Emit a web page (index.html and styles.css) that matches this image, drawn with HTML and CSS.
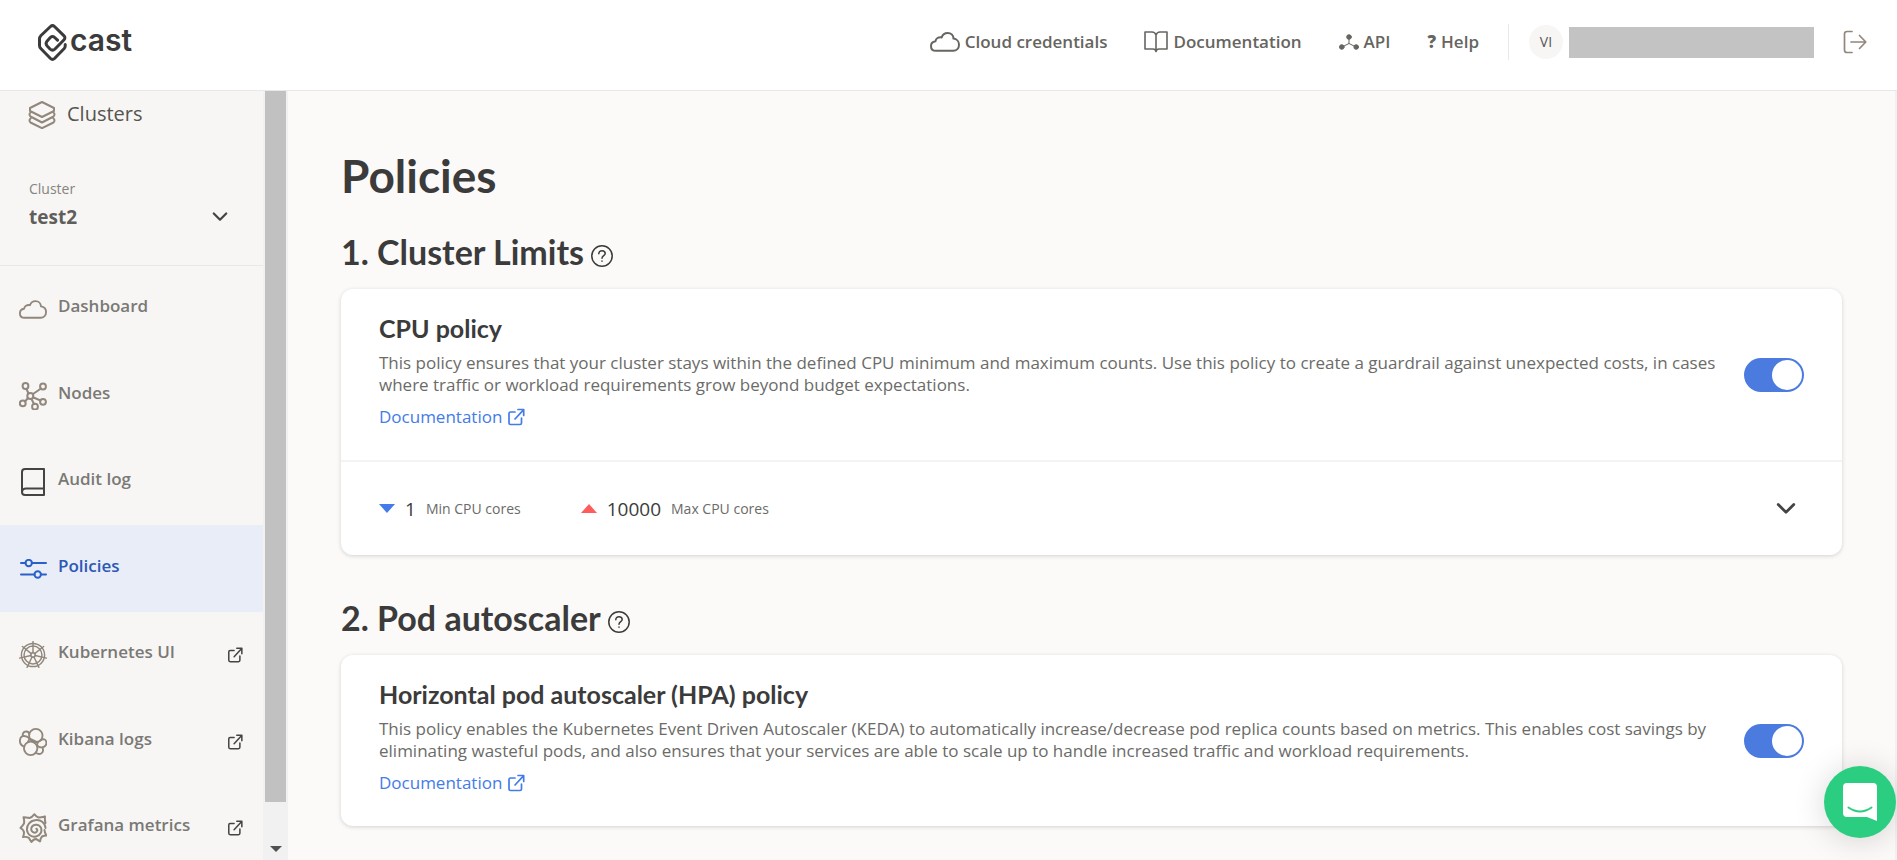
FILE: index.html
```html
<!DOCTYPE html>
<html lang="en">
<head>
<meta charset="utf-8">
<title>Policies</title>
<link rel="stylesheet" href="styles.css">
</head>
<body>
<svg class="sprite" aria-hidden="true">
  <symbol id="external" viewBox="0 0 18 18"><path d="M8 4H3.500Q2 4 2 5.500V15Q2 16.500 3.500 16.500H13Q14.500 16.500 14.500 15V10M8 11L16.500 1.800M11 1.500H16.700V7.500"/></symbol>
  <symbol id="cloud" viewBox="0 0 30 20"><path d="M6 18.800C3 18.800 1 16.800 1 13.900C1 11.500 2.700 9.600 5.500 9.200C5.700 6.500 8.500 4.700 11.700 5.400C12.600 2.700 15 1 17.700 1C21 1 23.400 3.300 23.500 6.600C26.700 7 29 9.500 29 12.700C29 16.200 26.500 18.800 23.200 18.800Z"/></symbol>
  <symbol id="chevron" viewBox="0 0 18 12"><path d="M2 2L9 9L16 2"/></symbol>
  <symbol id="help" viewBox="0 0 22 22"><circle cx="11" cy="11" r="10.200"/><path d="M7.800 8.700C7.800 6.900 9.100 5.700 11 5.700S14.200 6.900 14.200 8.500C14.200 10.600 11 10.600 11 13.200M11 15.900V16.300"/></symbol>
</svg>
<header class="topbar">
  <a class="logo" href="#">
    <svg width="29" height="37" viewBox="0 0 29 37"><path d="M27.200 20.500V22Q27.200 23.500 26 24.800L16.500 34.500Q14.500 36.300 12.500 34.500L3 24.800Q1.500 23.300 1.500 21.500V15Q1.500 13 3 11.500L12.500 2.500Q14.500 .7 16.500 2.500L25.800 11.600Q28 13.700 25.800 16L17 25Q14.500 27.300 12 25L9.200 22Q7 19.500 9.200 17L12.300 13.500Q14.500 11.500 16.700 13.500L19.500 16.200"/></svg>
    <span>cast</span>
  </a>
  <nav class="topnav">
    <a href="#"><svg width="30" height="20"><use href="#cloud"/></svg>Cloud credentials</a>
    <a href="#"><svg class="thin" width="24" height="22" viewBox="0 0 24 22"><path d="M12 4Q11 1 8 1H1V18H9Q11.500 18 12 20.500Q12.500 18 15 18H23V1H16Q13 1 12 4V20"/></svg>Documentation</a>
    <a href="#"><svg class="nodes" width="20" height="16" viewBox="0 0 20 16"><path d="M10 3V9.500L3 13M10 9.500L17 13"/><circle cx="10" cy="3" r="2.300"/><circle cx="2.800" cy="13" r="2.300"/><circle cx="17.200" cy="13" r="2.300"/></svg>API</a>
    <a href="#"><b>?</b>Help</a>
  </nav>
  <div class="account">
    <span class="avatar">VI</span>
    <span class="user"></span>
    <button class="logout" aria-label="Log out"><svg width="24" height="24" viewBox="0 0 24 24"><path d="M9 1.500H4Q1.500 1.500 1.500 4V20Q1.500 22.500 4 22.500H9M8 12H22.500M16.500 5.500L22.800 12L16.500 18.500"/></svg></button>
  </div>
</header>
<div class="shell">
  <aside class="sidebar">
    <a class="clusters" href="#"><svg width="28" height="28" viewBox="0 0 28 28"><path d="M14 1L26 7V10L14 16L2 10V7ZM2.500 11.500Q.5 13 2.500 15.500L14 21.500L25.500 15.500Q27.500 13 25.500 11.500M2.500 17.500Q.5 19 2.500 21.500L14 27.200L25.500 21.500Q27.500 19 25.500 17.500"/></svg><span>Clusters</span></a>
    <button class="picker"><span class="picker-label">Cluster</span><span class="picker-value">test2</span><svg class="chev" width="16" height="12"><use href="#chevron"/></svg></button>
    <nav class="menu">
      <a href="#"><svg class="ico" width="28" height="19"><use href="#cloud"/></svg><span>Dashboard</span></a>
      <a href="#"><svg class="ico" width="28" height="28" viewBox="0 0 28 28"><path d="M9.500 11.500L7.500 7M14 12L22 6.500M14.500 15.500L21.500 18.500M12.500 17L15 22M9 16L6 19.500"/><circle cx="11.300" cy="14" r="3"/><circle cx="6.500" cy="4" r="2.900"/><circle cx="24" cy="4.500" r="2.900"/><circle cx="24" cy="19.800" r="2.900"/><circle cx="16" cy="24.700" r="2.900"/><circle cx="3.800" cy="21.300" r="2.900"/></svg><span>Nodes</span></a>
      <a href="#"><svg class="ico dark" width="28" height="28" viewBox="0 0 28 28"><path d="M25 1H6Q3 1 3 4V24Q3 27 6 27H25ZM3 23.500Q3.500 20.500 7 20.500H25"/></svg><span>Audit log</span></a>
      <a class="active" href="#"><svg class="ico" width="28" height="20" viewBox="0 0 28 20"><path d="M2 4H6.500M13 4H27M2 15.500H15.500M22 15.500H27"/><circle cx="9.700" cy="4" r="3.200"/><circle cx="18.700" cy="15.500" r="3.200"/></svg><span>Policies</span></a>
      <a href="#"><svg class="ico fine" width="28" height="28" viewBox="-14.500 -14.500 29 29"><circle r="12"/><circle r="9.300"/><circle r="2.300"/><path d="M0-2.300V-14M1.800-1.400L11-8.800M2.200.5L14 3.200M1 2.100L6.100 12.800M-1 2.100L-6.100 12.800M-2.200.5L-14 3.200M-1.800-1.400L-11-8.800"/></svg><span>Kubernetes UI</span><svg class="ext" width="16" height="16"><use href="#external"/></svg></a>
      <a href="#"><svg class="ico" width="28" height="28" viewBox="0 0 30 30"><circle cx="18" cy="8.200" r="7.200"/><circle cx="12.500" cy="21.800" r="7.200"/><path d="M11.400 11.300L20 15.400M11 6.500C10.500 3 4 2 3.800 8.800M11.400 11.300C9 9 6 8.300 3.800 8.800C0 10.500-.5 18 5.700 20M11.400 11.300L9.500 15.200M22.800 13.500C30 8 32 20 25 20.700C22 21 20 19.500 19.300 18L20.500 14.500M25 20.700C27.500 26 23 30 17.800 26.500"/></svg><span>Kibana logs</span><svg class="ext" width="16" height="16"><use href="#external"/></svg></a>
      <a href="#"><svg class="ico" width="28" height="30" viewBox="0 0 28 30"><path d="M26.500 10Q25.500 6 26 3.500Q22 4.500 19.500 4.500Q17 3.500 15.500 1.200Q13 4.500 10.500 5Q7 4.500 4.500 4.200Q5.500 8 5 10.500Q3.500 13 1.500 15Q5 17 5 19.500Q5 22 4 24Q8 23.500 10 25Q11 27 12.500 29Q14.500 26 17 26Q19 27 21 28.500Q21.500 25 23 23.500Q25 22.500 27.500 22.500Q25.500 19.500 25.500 17M26.500 15C26 9.500 21.500 6.500 17 7C11 7.500 7.500 12 8 17C8.500 22 13 24.500 17 23.500C21.500 22.500 23.500 18 21.800 14.500C20 11 14.500 10.800 12.800 14C11.300 17 13.200 20 16 19.700C18.500 19.300 19 16.500 17.300 15.700"/></svg><span>Grafana metrics</span><svg class="ext" width="16" height="16"><use href="#external"/></svg></a>
    </nav>
  </aside>
  <div class="track" aria-hidden="true"><div class="thumb"></div><div class="arrow"></div></div>
  <main class="content">
    <h1>Policies</h1>
    <section>
      <h2>1. Cluster Limits<svg width="22" height="22"><use href="#help"/></svg></h2>
      <div class="card">
        <div class="policy">
          <div class="copy">
            <h3>CPU policy</h3>
            <p>This policy ensures that your cluster stays within the defined CPU minimum and maximum counts. Use this policy to create a guardrail against unexpected costs, in cases where traffic or workload requirements grow beyond budget expectations.</p>
            <a class="doc" href="#">Documentation<svg width="18" height="18"><use href="#external"/></svg></a>
          </div>
          <input class="toggle" type="checkbox" checked aria-label="CPU policy">
        </div>
        <div class="limits">
          <div class="stat"><i class="down"></i><strong>1</strong><span>Min CPU cores</span></div>
          <div class="stat"><i class="up"></i><strong>10000</strong><span>Max CPU cores</span></div>
          <button class="expand" aria-label="Expand"><svg class="chev" width="20" height="14"><use href="#chevron"/></svg></button>
        </div>
      </div>
    </section>
    <section>
      <h2>2. Pod autoscaler<svg width="22" height="22"><use href="#help"/></svg></h2>
      <div class="card">
        <div class="policy">
          <div class="copy">
            <h3>Horizontal pod autoscaler (HPA) policy</h3>
            <p>This policy enables the Kubernetes Event Driven Autoscaler (KEDA) to automatically increase/decrease pod replica counts based on metrics. This enables cost savings by eliminating wasteful pods, and also ensures that your services are able to scale up to handle increased traffic and workload requirements.</p>
            <a class="doc" href="#">Documentation<svg width="18" height="18"><use href="#external"/></svg></a>
          </div>
          <input class="toggle" type="checkbox" checked aria-label="Horizontal pod autoscaler policy">
        </div>
      </div>
    </section>
  </main>
</div>
<button class="chat" aria-label="Open chat"><svg width="34" height="38" viewBox="0 0 34 38"><path class="bubble" d="M4 0H30Q34 0 34 4V38L24 34H4Q0 34 0 30V4Q0 0 4 0Z"/><path class="smile" d="M5.500 24.500Q17 32.500 28.500 24.500"/></svg></button>
</body>
</html>
```
FILE: styles.css
```css
* { box-sizing: border-box; }
body {
  margin: 0;
  height: 100vh;
  display: flex;
  flex-direction: column;
  overflow: hidden;
  background: #fbfaf8;
  color: #6b6b68;
  font: 17px/22px "Open Sans", "Noto Sans", sans-serif;
}
a { color: inherit; text-decoration: none; }
button { padding: 0; border: 0; background: none; font: inherit; color: inherit; }
svg { flex: none; fill: none; stroke: currentColor; stroke-width: 2; stroke-linecap: round; stroke-linejoin: round; }
.sprite { display: none; }
h1, h2, h3, p { margin: 0; }

.topbar {
  flex: none;
  display: flex;
  align-items: center;
  height: 91px;
  padding: 0 30px 6px 38px;
  border-bottom: 1px solid #e8e8e6;
  background: #fff;
}
.logo { display: flex; align-items: center; gap: 3px; margin-right: auto; color: #3b3b3b; font: 600 30px/36px Inter, sans-serif; }
.logo svg { stroke-width: 3; }
.logo span { padding-bottom: 4px; }
.topnav { display: flex; gap: 37px; padding-right: 29px; font-weight: 600; color: #666560; }
.topnav a { display: flex; align-items: center; gap: 5px; }
.topnav .thin { stroke-width: 1.6; }
.nodes { stroke-width: 1; }
.nodes circle { fill: currentColor; }
.account { display: flex; align-items: center; height: 36px; padding-left: 20px; border-left: 1px solid #e8e8e6; }
.avatar { width: 34px; height: 34px; border-radius: 50%; background: #f7f6f4; font-size: 14px; line-height: 33px; text-align: center; color: #55555a; }
.user { width: 245px; height: 31px; margin: 0 29px 0 6px; background: #c3c3c3; }
.logout { display: flex; color: #91877c; }
.logout svg { stroke-width: 1.700; }

.shell { flex: 1; min-height: 0; display: flex; }
.sidebar { flex: none; width: 263px; overflow: hidden; background: #f7f6f4; }
.clusters { display: flex; align-items: center; gap: 11px; height: 48px; padding-left: 28px; font-size: 20px; font-weight: 500; color: #55544f; }
.clusters svg { color: #91877c; }
.clusters span { padding-bottom: 2px; }
.picker { display: grid; grid-template-columns: 1fr auto; align-items: center; width: 100%; height: 127px; padding: 36px 35px 34px 29px; border-bottom: 1px solid #e8e8e6; text-align: left; }
.picker-label { grid-column: 1 / 3; font-size: 14px; color: #85847f; }
.picker-value { font-size: 19px; font-weight: 700; color: #5f5e5b; }
.chev { color: #444; stroke-width: 2.500; }
.menu a { display: flex; align-items: center; height: 86px; padding: 0 20px 0 19px; font-weight: 600; color: #7a7976; }
.menu a:nth-child(even) { height: 87px; }
.menu .active { background: #e8edf8; color: #2d57b5; }
.menu span { flex: 1; padding: 0 0 6px 11px; }
.ico { color: #91877c; }
.active .ico { color: #2a60c8; }
.ico.dark { color: #444; }
.ico.fine { stroke-width: 1.500; }
.ext { color: #444; stroke-width: 1.700; }
.track { flex: none; width: 25px; display: flex; flex-direction: column; align-items: center; justify-content: space-between; padding-bottom: 8px; background: #f1f1f1; }
.thumb { width: 21px; height: 711px; background: #c1c1c1; }
.arrow { border: 6px solid transparent; border-top-color: #505050; border-bottom: 0; }

.content { flex: 1; min-width: 0; padding: 59px 53px 0; border-right: 2px solid #f1f1f1; color: #3b3b3b; }
h1 { font: 700 46px/52px Lato, sans-serif; }
h2 { display: flex; align-items: center; gap: 7px; height: 38px; font: 700 34px/38px Lato, sans-serif; }
h2 svg { margin-top: 8px; stroke-width: 1.500; }
h3 { font: 700 25px/28px Lato, sans-serif; }
section { padding-top: 31px; }
section + section { padding-top: 44px; }
.card { margin-top: 18px; border-radius: 12px; background: #fff; box-shadow: 0 1px 4px rgba(0, 0, 0, .16); }
.policy { display: flex; align-items: center; justify-content: space-between; gap: 20px; padding: 0 38px; }
.copy { flex: 1; min-width: 0; padding: 25px 0 32px; }
.copy p { margin-top: 10px; color: #6b6b68; }
.doc { display: flex; align-items: center; gap: 5px; margin-top: 10px; color: #437be8; }
.doc svg { stroke-width: 1.700; }
.toggle { appearance: none; flex: none; width: 60px; height: 34px; margin: 0; padding: 2px; border-radius: 17px; background: #4c7be0; }
.toggle::before { content: ""; display: block; width: 30px; height: 30px; margin-left: auto; border-radius: 50%; background: #fff; }
.limits { display: flex; align-items: center; gap: 60px; height: 95px; padding: 0 46px 0 38px; border-top: 2px solid #f3f3f3; }
.stat { display: flex; align-items: center; gap: 10px; }
.stat i { border: 8px solid transparent; }
.stat .down { border-top: 9px solid #437be8; border-bottom: 0; }
.stat .up { border-bottom: 9px solid #ff5c5c; border-top: 0; }
.stat strong { font-size: 19px; font-weight: 500; }
.stat span { font-size: 14px; color: #6b6b68; }
.expand { display: flex; margin-left: auto; }
.chat { position: fixed; right: 1px; bottom: 22px; display: grid; place-items: center; width: 72px; height: 72px; border-radius: 50%; background: #2bce80; box-shadow: 0 2px 32px rgba(0, 0, 0, .16); }
.bubble { fill: #fff; stroke: none; }
.smile { stroke: #2bce80; }
```
